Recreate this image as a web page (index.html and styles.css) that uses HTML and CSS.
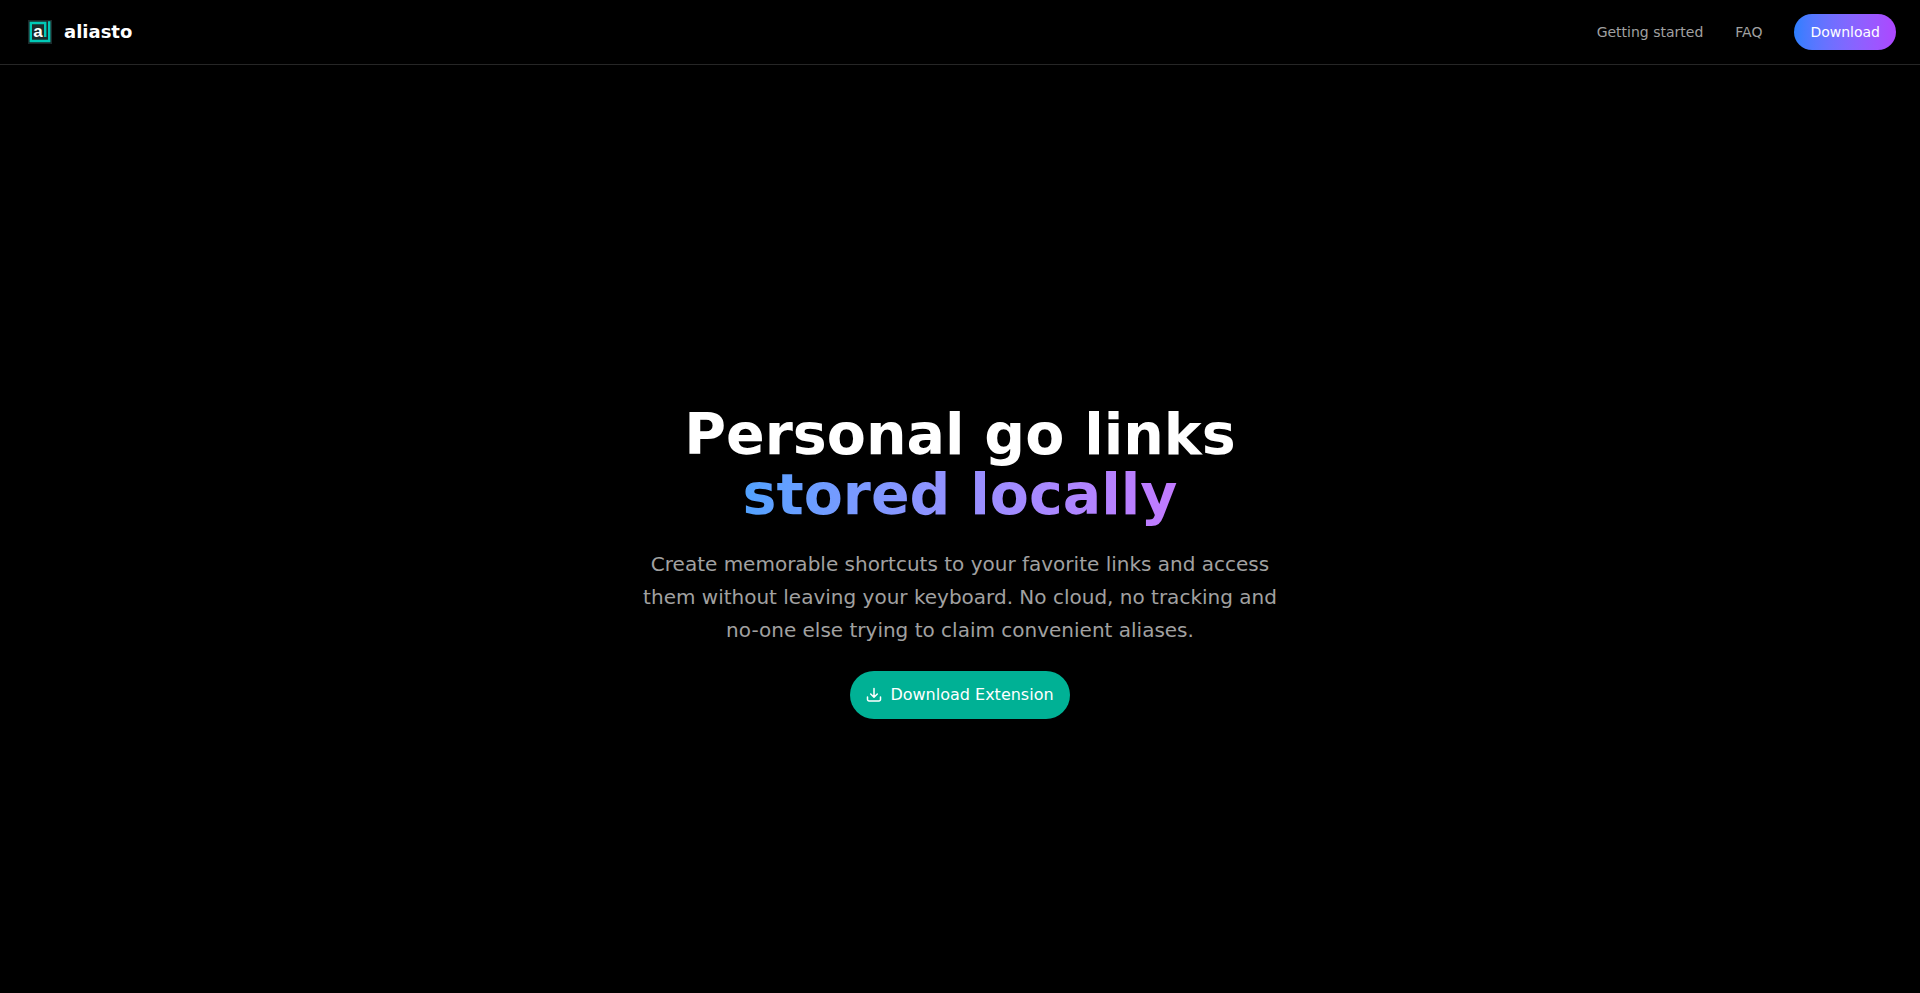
FILE: index.html
```html
<!DOCTYPE html>
<html lang="en">
<head>
    <meta charset="UTF-8">
    <meta name="viewport" content="width=device-width, initial-scale=1.0">
    <title>aliasto</title>
    <link rel="stylesheet" href="styles.css">
</head>
<body>

<header class="header">
    <a class="brand" href="#">
        <svg class="logo" viewBox="0 0 24 24" aria-hidden="true">
            <rect width="24" height="24" fill="#1b2a2b"/>
            <path d="M17.200 17V3H2.800v18H21.200V1.200" fill="none" stroke="#00c9b7" stroke-width="2.400"/>
            <text class="logo-letter" x="10" y="17" text-anchor="middle">a</text>
        </svg>
        <span>aliasto</span>
    </a>
    <nav class="nav">
        <a class="nav-link" href="#getting-started">Getting started</a>
        <a class="nav-link" href="#faq">FAQ</a>
        <a class="btn-nav" href="#download">Download</a>
    </nav>
</header>

<main class="hero">
    <h1 class="title">Personal go links<br><span class="title-gradient">stored locally</span></h1>
    <p class="subtitle">Create memorable shortcuts to your favorite links and access them without leaving your keyboard. No cloud, no tracking and no-one else trying to claim convenient aliases.</p>
    <button class="btn-download" type="button">
        <svg class="icon" viewBox="0 0 16 16" aria-hidden="true">
            <path d="M8 1.500v8.500M4.700 7 8 10.200 11.300 7M1.500 10v2.500a1.500 1.500 0 0 0 1.500 1.500h10a1.500 1.500 0 0 0 1.500-1.500V10"/>
        </svg>
        Download Extension
    </button>
</main>

</body>
</html>
```

FILE: styles.css
```css
*{margin: 0; padding: 0; box-sizing: border-box;}

body{
    display: flex;
    flex-direction: column;
    min-height: 100vh;
    background: #000;
    color: #fff;
    font-family: "DejaVu Sans", sans-serif;
    font-size: 16px;
}
a{
    color: inherit;
    text-decoration: none;
}

/* header */
.header{
    display: flex;
    justify-content: space-between;
    align-items: center;
    height: 65px;
    padding: 0 24px;
    border-bottom: 1px solid #262626;
}
.brand{
    display: flex;
    align-items: center;
    gap: 12px;
    padding-left: 4px;
    font-size: 18px;
    line-height: 28px;
    font-weight: bold;
}
.logo{
    width: 24px;
    height: 24px;
}
.logo-letter{
    fill: #fff;
    font-family: "Liberation Sans", sans-serif;
    font-size: 17px;
    font-weight: bold;
}
.nav{
    display: flex;
    align-items: center;
    gap: 32px;
    font-size: 14px;
    line-height: 20px;
}
.nav-link{
    color: #a1a1a1;
}
.btn-nav{
    padding: 8px 16px;
    border-radius: 18px;
    background: linear-gradient(to right in oklab, #2b7fff, #ad46ff);
}

/* hero */
.hero{
    flex: 1;
    display: flex;
    flex-direction: column;
    justify-content: center;
    align-items: center;
    gap: 24px;
    padding: 64px 24px 0;
    text-align: center;
}
.title{
    font-size: 57px;
    line-height: 60px;
}
.title-gradient{
    background: linear-gradient(to right in oklab, #51a2ff, #c27aff);
    -webkit-background-clip: text;
    background-clip: text;
    color: transparent;
}
.subtitle{
    max-width: 672px;
    color: #a1a1a1;
    font-size: 20px;
    line-height: 33px;
}
.btn-download{
    display: flex;
    align-items: center;
    gap: 8px;
    height: 48px;
    padding: 0 16px;
    border: none;
    border-radius: 24px;
    background: #00b195;
    color: #fff;
    font: inherit;
    cursor: pointer;
}
.icon{
    width: 16px;
    height: 16px;
    fill: none;
    stroke: currentColor;
    stroke-width: 1.5;
    stroke-linecap: round;
    stroke-linejoin: round;
}
```
